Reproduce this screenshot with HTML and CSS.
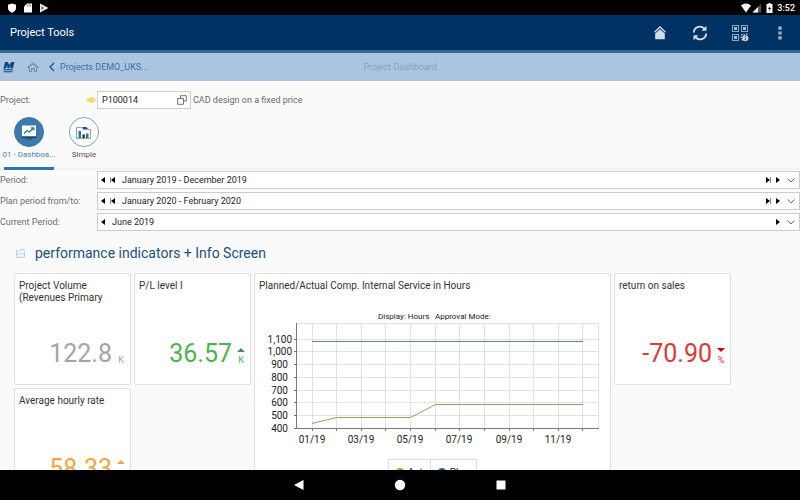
FILE: index.html
```html
<!DOCTYPE html>
<html lang="en">
<head>
    <meta charset="UTF-8">
    <meta name="viewport" content="width=device-width, initial-scale=1.0">
    <title>Project Tools</title>
    <link rel="stylesheet" href="styles.css">
</head>
<body>
    <div class="status-bar">
        <div class="status-icons">
            <svg width="10" height="10" viewBox="0 0 10 10"><path d="M5 0.500L9 1.800V5C9 7.500 7 9 5 9.800C3 9 1 7.500 1 5V1.800Z" fill="#fff"/></svg>
            <svg width="10" height="10" viewBox="0 0 10 10"><path d="M4 0.500H9V9.500H1V3.500Z" fill="#fff"/><path d="M4.500 1.500V3.500M6 1.500V3.500M7.500 1.500V3.500" stroke="#555" stroke-width="0.700"/></svg>
            <svg width="10" height="10" viewBox="0 0 10 10"><path d="M1 0.500L9.500 5L1 9.500Z" fill="#eee"/><path d="M2.500 3L5 5L2.500 7Z" fill="#555"/></svg>
        </div>
        <div class="status-right">
            <svg width="12" height="10" viewBox="0 0 12 10"><path d="M1 2.500Q6 -1.500 11 2.500L6 9.500Z" fill="#fff"/></svg>
            <svg width="10" height="10" viewBox="0 0 10 10"><path d="M9 1V9.500H0.500Z" fill="#555"/><path d="M6 4V9.500H0.500Z" fill="#fff"/></svg>
            <svg class="battery" width="7" height="10" viewBox="0 0 7 10"><path d="M2.500 0H4.500V1H6.500V10H0.500V1H2.500Z" fill="#fff"/><path d="M4 2.500L2 6H3.500L3 8.500L5 5H3.500Z" fill="#000"/></svg>
            <span>3:52</span>
        </div>
    </div>

    <header class="app-bar">
        <h1>Project Tools</h1>
        <div class="actions">
            <button aria-label="Home">
                <svg width="16" height="16" viewBox="0 0 16 16"><path d="M2.500 7.300L8 2L13.500 7.300" fill="none" stroke="#d3dce6" stroke-width="1.300"/><path d="M8 4.200L12.800 8.500V14.300H3.200V8.500Z" fill="#d3dce6"/></svg>
            </button>
            <button aria-label="Refresh">
                <svg width="16" height="16" viewBox="0 0 16 16" fill="none" stroke="#d3dce6" stroke-width="1.900"><path d="M1.800 7.500C2 2.500 8 -0.500 12.300 3.500"/><path d="M14.200 8.500C14 13.500 8 16.500 3.700 12.500"/><path d="M14.500 0.800V5.800H9.500ZM1.500 15.200V10.200H6.500Z" fill="#d3dce6" stroke="none"/></svg>
            </button>
            <button aria-label="Scan code">
                <svg width="18" height="18" viewBox="0 0 18 18"><g fill="none" stroke="#8fa5bd" stroke-width="1.100"><path d="M1.500 1.500H7.500V7.500H1.500ZM10.500 1.500H16.500V7.500H10.500ZM1.500 10.500H7.500V16.500H1.500Z"/></g><path d="M3 3H6V6H3ZM12 3H15V6H12ZM3 12H6V15H3Z" fill="#a9bacb"/><path d="M10 10H11.500V11.500H10ZM12.500 10H14V11.500H12.500ZM15 9.500H16.500V11H15ZM9.500 12.500H11V14H9.500ZM10.500 15H12V16.500H10.500Z" fill="#a9bacb"/><circle cx="14.300" cy="14.300" r="3" fill="#d3dce6"/><path d="M14.300 12.300V13.200M14.300 13.800V16.300" stroke="#003263" stroke-width="0.900"/></svg>
            </button>
            <button aria-label="More">
                <svg width="16" height="16" viewBox="0 0 16 16" fill="#9eb0c4"><path d="M6.300 1.500H9.700V4.700H6.300ZM6.300 6.400H9.700V9.600H6.300ZM6.300 11.300H9.700V14.500H6.300Z"/></svg>
            </button>
        </div>
    </header>

    <nav class="crumbs">
        <div class="crumb-links">
            <svg width="12" height="12" viewBox="0 0 12 12"><path d="M2 1H5L6 4L8.500 1H11.500L9.800 7.500H7.200L8 4.500L5.700 7.500H4.700L4 4.500L3 7.500H0.500Z" fill="#0f4778"/><path d="M0.500 8.800H10M0.500 10.800H9.500" stroke="#0f4778" stroke-width="1"/></svg>
            <a href="#home" aria-label="Start page"><svg width="12" height="12" viewBox="0 0 12 12" fill="none" stroke="#5583ad" stroke-width="0.900"><path d="M1 6L6 1.500L11 6V7L6 3L1 7ZM2.500 7V10.500H4.700V7.500H7.300V10.500H9.500V7"/></svg></a>
            <a href="#projects" class="back"><svg width="6" height="10" viewBox="0 0 6 10"><path d="M5 1L1 5L5 9" fill="none" stroke="#1c4f80" stroke-width="1.200"/></svg>Projects DEMO_UKS...</a>
        </div>
        <h2>Project Dashboard</h2>
    </nav>

    <main>
        <div class="row project-row">
            <label for="project">Project:</label>
            <svg width="9" height="8" viewBox="0 0 9 8"><path d="M0.500 2.500H4.500V0.800L8.500 4L4.500 7.200V5.500H0.500Z" fill="#f6dc5c" stroke="#e5c648" stroke-width="0.500"/></svg>
            <div class="field project-field">
                <input type="text" id="project" value="P100014">
                <button aria-label="Select project"><svg width="10" height="10" viewBox="0 0 10 10" fill="none" stroke="#666" stroke-width="0.900"><path d="M3.500 3.500V0.700H9.300V6H6.500"/><path d="M0.700 3.500H6.500V9.300H0.700Z"/></svg></button>
            </div>
            <span class="hint">CAD design on a fixed price</span>
        </div>

        <div class="tabs">
            <button class="tab active">
                <span class="circle"><svg width="16" height="16" viewBox="0 0 16 16"><path d="M1 1.500H15V12H1Z" fill="#fff"/><path d="M0.500 13.500H15.500M5 15H11" stroke="#263f55" stroke-width="1.200"/><path d="M3 9.500L6 6.500L8.500 8L12.500 4M10 4H12.700V6.500" fill="none" stroke="#2676b3" stroke-width="1.300"/></svg></span>
                01 - Dashboa...
            </button>
            <button class="tab">
                <span class="circle"><svg width="16" height="16" viewBox="0 0 16 16"><path d="M0.500 14.500V3.500H5.500L7 5.500H14.500V14.500Z" fill="#fff" stroke="#777" stroke-width="0.700"/><path d="M6 3H10.500L12 5H7.500Z" fill="#14558c"/><path d="M2.500 7H5V14H2.500ZM10 9.500H12.500V14H10Z" fill="#1e7ac0"/><path d="M6.500 10.500H8.800V14H6.500Z" fill="#223"/></svg></span>
                Simple
            </button>
        </div>

        <div class="periods">
            <div class="row">
                <label for="period">Period:</label>
                <div class="field">
                    <button aria-label="Previous"><svg width="4" height="6" viewBox="0 0 4 6"><path d="M4 0V6L0 3Z"/></svg></button>
                    <button aria-label="First"><svg width="5" height="6" viewBox="0 0 5 6"><path d="M5 0V6L1 3Z"/><path d="M0 0H1V6H0Z" fill="#888"/></svg></button>
                    <select id="period"><option>January 2019 - December 2019</option></select>
                    <button aria-label="Last"><svg width="5" height="6" viewBox="0 0 5 6"><path d="M0 0L4 3L0 6Z"/><path d="M4 0H5V6H4Z" fill="#888"/></svg></button>
                    <button aria-label="Next"><svg width="4" height="6" viewBox="0 0 4 6"><path d="M0 0L4 3L0 6Z"/></svg></button>
                    <button aria-label="Open" class="open"><svg width="8" height="5" viewBox="0 0 8 5"><path d="M0.500 0.500L4 4L7.500 0.500" fill="none" stroke="#555" stroke-width="0.900"/></svg></button>
                </div>
            </div>
            <div class="row">
                <label for="plan">Plan period from/to:</label>
                <div class="field">
                    <button aria-label="Previous"><svg width="4" height="6" viewBox="0 0 4 6"><path d="M4 0V6L0 3Z"/></svg></button>
                    <button aria-label="First"><svg width="5" height="6" viewBox="0 0 5 6"><path d="M5 0V6L1 3Z"/><path d="M0 0H1V6H0Z" fill="#888"/></svg></button>
                    <select id="plan"><option>January 2020 - February 2020</option></select>
                    <button aria-label="Last"><svg width="5" height="6" viewBox="0 0 5 6"><path d="M0 0L4 3L0 6Z"/><path d="M4 0H5V6H4Z" fill="#888"/></svg></button>
                    <button aria-label="Next"><svg width="4" height="6" viewBox="0 0 4 6"><path d="M0 0L4 3L0 6Z"/></svg></button>
                    <button aria-label="Open" class="open"><svg width="8" height="5" viewBox="0 0 8 5"><path d="M0.500 0.500L4 4L7.500 0.500" fill="none" stroke="#555" stroke-width="0.900"/></svg></button>
                </div>
            </div>
            <div class="row">
                <label for="current">Current Period:</label>
                <div class="field">
                    <button aria-label="Previous"><svg width="4" height="6" viewBox="0 0 4 6"><path d="M4 0V6L0 3Z"/></svg></button>
                    <select id="current"><option>June 2019</option></select>
                    <button aria-label="Next"><svg width="4" height="6" viewBox="0 0 4 6"><path d="M0 0L4 3L0 6Z"/></svg></button>
                    <button aria-label="Open" class="open"><svg width="8" height="5" viewBox="0 0 8 5"><path d="M0.500 0.500L4 4L7.500 0.500" fill="none" stroke="#555" stroke-width="0.900"/></svg></button>
                </div>
            </div>
        </div>

        <h3 class="section-title">
            <svg width="11" height="10" viewBox="0 0 11 10" fill="none" stroke="#a9cae6" stroke-width="0.900"><path d="M1.500 3.500V9.300H9.500V3.500M1.500 6H9.500"/><path d="M0.500 1L3.500 3.500L5.500 1.500H10"/></svg>
            performance indicators + Info Screen
        </h3>

        <section class="cards">
            <div class="card">
                <h4>Project Volume (Revenues Primary</h4>
                <div class="value gray">122.8 <span class="unit">K</span></div>
            </div>
            <div class="card">
                <h4>P/L level I</h4>
                <div class="value green">36.57 <span class="unit"><i class="up"></i>K</span></div>
            </div>
            <div class="card chart-card">
                <h4>Planned/Actual Comp. Internal Service in Hours</h4>
                <svg class="chart" width="350" height="140" viewBox="0 0 350 140">
                    <g class="caption">
                        <text x="121" y="12">Display: Hours</text>
                        <text x="178" y="12">Approval Mode:</text>
                    </g>
                    <g class="grid">
                        <path d="M39.500 16.500H341.500V121.500M39.500 32.500H341.500M39.500 44.500H341.500M39.500 57.500H341.500M39.500 70.500H341.500M39.500 83.500H341.500M39.500 95.500H341.500M39.500 108.500H341.500"/>
                        <path d="M55.500 16.500V121.500M79.500 16.500V121.500M104.500 16.500V121.500M128.500 16.500V121.500M153.500 16.500V121.500M178.500 16.500V121.500M202.500 16.500V121.500M227.500 16.500V121.500M252.500 16.500V121.500M276.500 16.500V121.500M301.500 16.500V121.500M325.500 16.500V121.500"/>
                    </g>
                    <g class="axis">
                        <path d="M39.500 16V121.500H342"/>
                        <path d="M37 32.500H39M37 44.500H39M37 57.500H39M37 70.500H39M37 83.500H39M37 95.500H39M37 108.500H39M37 121.500H39"/>
                        <path d="M55.500 122V124M79.500 122V124M104.500 122V124M128.500 122V124M153.500 122V124M178.500 122V124M202.500 122V124M227.500 122V124M252.500 122V124M276.500 122V124M301.500 122V124M325.500 122V124"/>
                    </g>
                    <path class="line-plan" d="M55 34.500H326"/>
                    <path class="line-actual" d="M55 116.500L79.500 110.500H153.500L178.500 97.500H326"/>
                    <g class="y-labels">
                        <text x="35" y="36">1,100</text>
                        <text x="35" y="48">1,000</text>
                        <text x="31" y="61">900</text>
                        <text x="31" y="74">800</text>
                        <text x="31" y="87">700</text>
                        <text x="31" y="99">600</text>
                        <text x="31" y="112">500</text>
                        <text x="31" y="125">400</text>
                    </g>
                    <g class="x-labels">
                        <text x="55" y="136">01/19</text>
                        <text x="104" y="136">03/19</text>
                        <text x="153" y="136">05/19</text>
                        <text x="202" y="136">07/19</text>
                        <text x="252" y="136">09/19</text>
                        <text x="301" y="136">11/19</text>
                    </g>
                </svg>
                <div class="legend">
                    <span><i class="dot olive"></i>Act</span>
                    <span><i class="dot blue"></i>Plan</span>
                </div>
            </div>
            <div class="card">
                <h4>return on sales</h4>
                <div class="value red">-70.90 <span class="unit"><i class="down"></i>%</span></div>
            </div>
            <div class="card">
                <h4>Average hourly rate</h4>
                <div class="value orange">58.33 <span class="unit"><i class="up"></i></span></div>
            </div>
        </section>
    </main>

    <footer class="nav-bar">
        <button aria-label="Back"><svg width="12" height="12" viewBox="0 0 12 12"><path d="M10.500 1V11L1 6Z" fill="#fff"/></svg></button>
        <button aria-label="Home screen"><svg width="12" height="12" viewBox="0 0 12 12"><circle cx="6" cy="6" r="5.200" fill="#fff"/></svg></button>
        <button aria-label="Recent apps"><svg width="12" height="12" viewBox="0 0 12 12"><path d="M1.500 1.500H10.500V10.500H1.500Z" fill="#fff"/></svg></button>
    </footer>
</body>
</html>
```

FILE: styles.css
```css
* {
    box-sizing: border-box;
}

body {
    margin: 0;
    height: 100vh;
    display: flex;
    flex-direction: column;
    overflow: hidden;
    font-family: Roboto, "Liberation Sans", sans-serif;
    font-size: 9px;
    color: #222;
    background: #fafafa;
}

h1, h2, h3, h4 {
    margin: 0;
    font-weight: normal;
}

button {
    display: flex;
    align-items: center;
    justify-content: center;
    padding: 0;
    border: none;
    background: none;
    font: inherit;
    color: inherit;
}

svg {
    display: block;
    flex: none;
}

.status-bar {
    flex: none;
    height: 15px;
    display: flex;
    justify-content: space-between;
    align-items: center;
    padding: 0 5px 0 7px;
    background: #000;
    color: #fff;
}

.status-icons {
    display: flex;
    gap: 6px;
}

.status-right {
    display: flex;
    align-items: center;
    font-size: 9px;
    font-weight: 500;
}

.battery {
    margin: 0 4px;
}

.app-bar {
    flex: none;
    height: 38px;
    display: flex;
    justify-content: space-between;
    align-items: center;
    padding: 0 10px;
    background: #003263;
    border-bottom: 3px solid #35688f;
    color: #fff;
}

.app-bar h1 {
    font-size: 11px;
    line-height: 16px;
}

.actions {
    display: flex;
    gap: 20px;
}

.actions button {
    width: 20px;
    height: 20px;
}

.crumbs {
    flex: none;
    height: 28px;
    display: grid;
    grid-template-columns: 1fr auto 1fr;
    align-items: center;
    background: #abc5e0;
}

.crumb-links {
    display: flex;
    align-items: center;
    gap: 12px;
    padding-left: 3px;
}

.crumbs a {
    color: #3f6f9d;
    text-decoration: none;
}

.crumbs .back {
    display: flex;
    align-items: center;
    gap: 5px;
    margin-left: -2px;
}

.crumbs h2 {
    font-size: 9px;
    font-weight: 300;
    color: #6f94b8;
}

main {
    flex: 1;
    min-height: 0;
    overflow: hidden;
    padding-top: 10px;
}

.row {
    display: grid;
    grid-template-columns: 97px 1fr;
    align-items: center;
}

.row label,
.hint {
    color: #6b6b6b;
}

.field {
    display: flex;
    align-items: center;
    height: 18px;
    background: #fff;
    border: 1px solid #ccc;
}

.project-row {
    grid-template-columns: 87px 10px 94px 1fr;
}

.project-field {
    padding: 0 3px 0 4px;
}

.field input,
.field select {
    flex: 1;
    min-width: 0;
    height: 16px;
    padding: 0;
    border: none;
    background: none;
    appearance: none;
    font: inherit;
    color: #222;
}

.hint {
    padding-left: 2px;
}

.tabs {
    display: flex;
    gap: 5px;
    margin-top: 8px;
    padding-left: 4px;
    border-bottom: 2px solid #edf3f8;
}

.tab {
    width: 50px;
    flex-direction: column;
    gap: 3px;
    height: 53px;
    justify-content: flex-start;
    font-size: 8px;
    line-height: 10px;
    color: #555;
    white-space: nowrap;
    margin-bottom: -2px;
}

.tab.active {
    color: #4a7fae;
    border-bottom: 3px solid #2f75aa;
}

.circle {
    display: flex;
    align-items: center;
    justify-content: center;
    width: 30px;
    height: 30px;
    border: 1px solid #7ba3ca;
    border-radius: 50%;
    background: #fff;
}

.active .circle {
    background: #3e79ab;
    border-color: #3e79ab;
}

.periods {
    display: grid;
    gap: 3px;
    margin-top: 1px;
}

.periods .field {
    gap: 5px;
    padding: 0 4px 0 3px;
}

.periods select {
    margin-left: 2px;
}

.open {
    margin-left: 2px;
}

.section-title {
    display: flex;
    align-items: center;
    gap: 9px;
    margin-top: 12px;
    padding-left: 15px;
    font-size: 14px;
    line-height: 20px;
    color: #1c4f80;
}

.cards {
    display: grid;
    grid-template-columns: 117px 117px 357px 117px;
    grid-auto-rows: 112px;
    gap: 3px;
    margin-top: 10px;
    padding-left: 14px;
}

.card {
    display: flex;
    flex-direction: column;
    justify-content: space-between;
    padding: 6px 4px 16px;
    background: #fff;
    border: 1px solid #e0e0e0;
    border-radius: 2px;
}

.card h4 {
    font-size: 10px;
    line-height: 12px;
    color: #333;
}

.chart-card {
    grid-row: span 2;
    justify-content: flex-start;
}

.value {
    display: flex;
    justify-content: flex-end;
    gap: 5px;
    padding-right: 1px;
    font-size: 25px;
    line-height: 28px;
}

.unit {
    display: flex;
    flex-direction: column;
    justify-content: flex-end;
    align-items: center;
    gap: 3px;
    min-width: 8px;
    font-size: 9px;
    line-height: 10px;
    padding-bottom: 3px;
}

.up,
.down {
    border: 4px solid transparent;
    border-top-width: 0;
    border-bottom-color: currentColor;
}

.down {
    border-top: 4px solid #c00;
    border-bottom: none;
}

.gray {
    color: #a5a5a5;
}

.green {
    color: #4cb34f;
}

.green .up {
    border-bottom-color: #4e8e50;
}

.red {
    color: #dd3a36;
}

.orange {
    color: #f0a83c;
}

.orange .unit {
    justify-content: flex-start;
    padding-top: 5px;
}

.chart {
    margin-top: 15px;
    margin-left: -2px;
    margin-bottom: 12px;
}

.chart path {
    fill: none;
}

.chart text {
    font-size: 10px;
    fill: #222;
}

.chart .caption text {
    font-size: 8px;
}

.grid path {
    stroke: #e2e2e2;
}

.axis path {
    stroke: #777;
}

.line-plan {
    stroke: #5f84a3;
}

.line-actual {
    stroke: #9a9a6c;
}

.y-labels text {
    text-anchor: end;
}

.x-labels text {
    text-anchor: middle;
}

.legend {
    display: flex;
    align-self: center;
    border: 1px solid #ddd;
}

.legend span {
    display: flex;
    align-items: center;
    gap: 4px;
    height: 24px;
    padding: 0 7px;
    font-size: 10px;
}

.legend span + span {
    border-left: 1px solid #ddd;
}

.dot {
    width: 8px;
    height: 8px;
    border-radius: 50%;
}

.olive {
    background: #93a41a;
}

.blue {
    background: #1f5fae;
}

.nav-bar {
    flex: none;
    height: 30px;
    display: flex;
    justify-content: center;
    align-items: center;
    gap: 89px;
    background: #000;
}
```
